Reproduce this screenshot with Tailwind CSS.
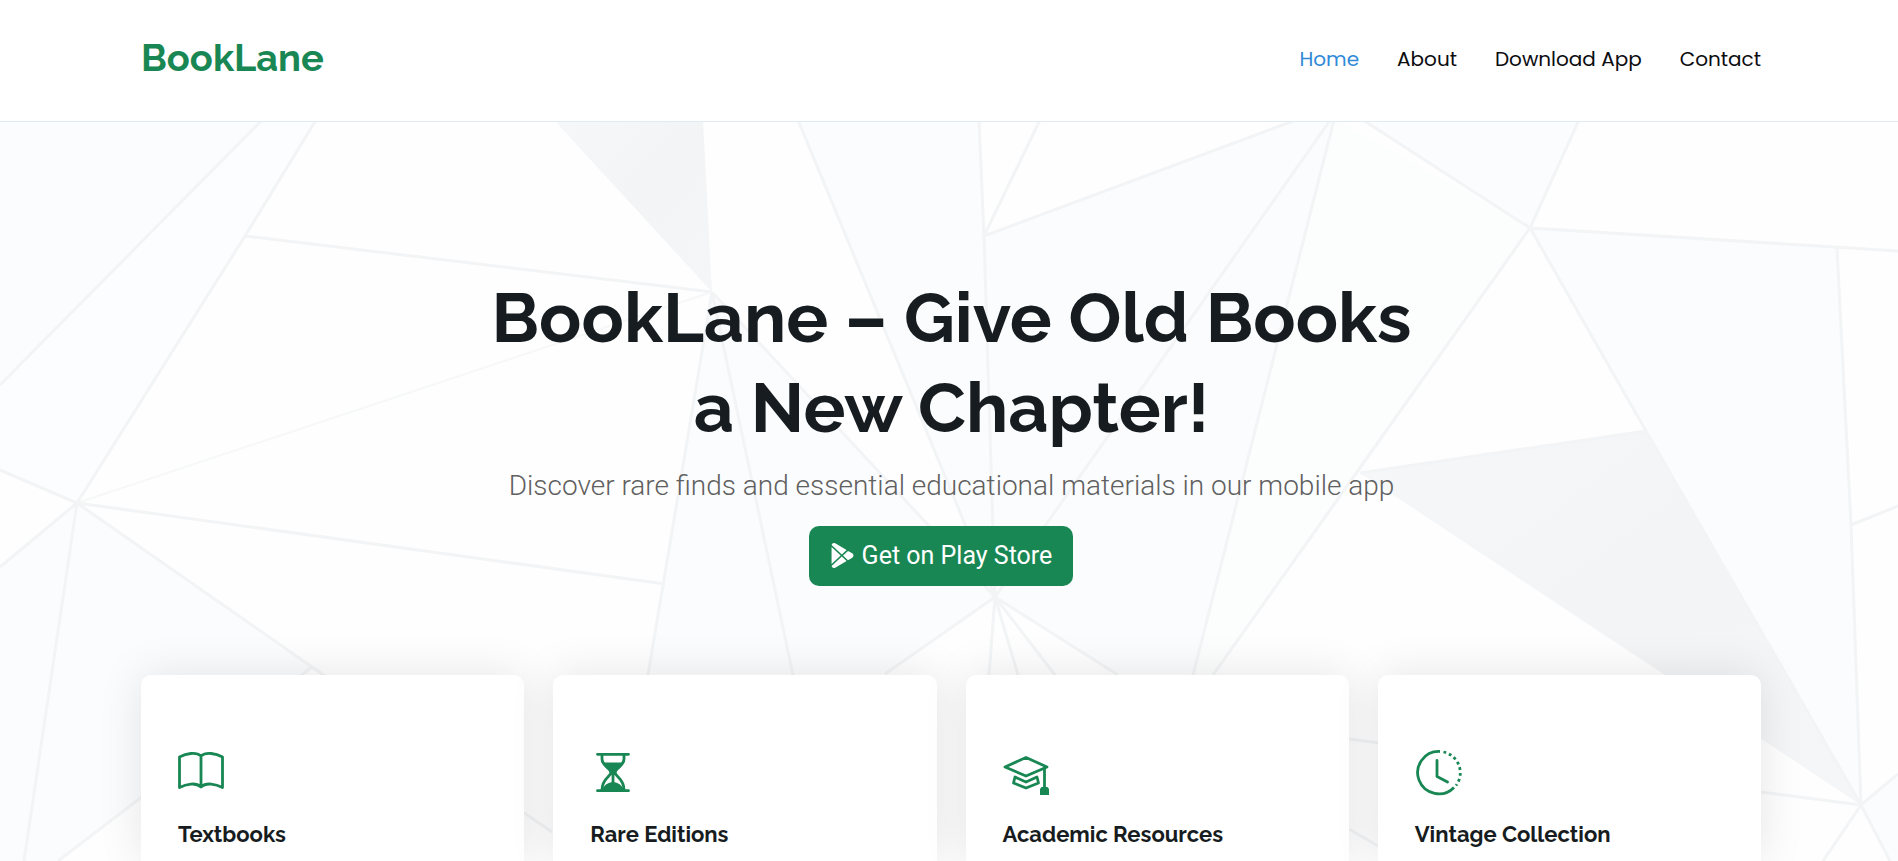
<!DOCTYPE html>
<html lang="en">
<head>
  <meta charset="UTF-8" />
  <meta name="viewport" content="width=device-width, initial-scale=1" />
  <title>BookLane</title>
  <script src="https://cdn.jsdelivr.net/npm/@tailwindcss/browser@4"></script>
</head>
<body class="h-screen flex flex-col overflow-hidden bg-white font-[Roboto,sans-serif] text-[#161c20]">

  <!-- Header -->
  <header class="flex items-center justify-between h-[122px] shrink-0 pl-[141px] pr-[137px] pb-1 border-b border-[#dfebf5] bg-white">
    <a href="#" class="pb-[2px] font-[Raleway,Lato,sans-serif] text-[38px] leading-[48px] font-bold text-[#198754]">BookLane</a>
    <nav class="flex gap-[38px] font-[Poppins,Inter,sans-serif] text-[20px] leading-[30px] text-[#0b0d0f]">
      <a href="#" class="text-[#318ad8]">Home</a>
      <a href="#about">About</a>
      <a href="#download">Download App</a>
      <a href="#contact">Contact</a>
    </nav>
  </header>

  <!-- Hero -->
  <main class="relative flex-1 flex flex-col overflow-hidden bg-[#fefefe]">
    <svg class="absolute inset-0 w-full h-full" viewBox="0 122 1898 739" preserveAspectRatio="xMidYMin slice" aria-hidden="true">
      <defs>
        <linearGradient id="shade" x1="0" y1="0" x2="1" y2="1">
          <stop offset="0" stop-color="#f6f7f8" />
          <stop offset="0.5" stop-color="#f3f4f5" />
          <stop offset="1" stop-color="#f5f6f7" />
        </linearGradient>
      </defs>
      <!-- pale facets -->
      <g fill="#fbfcfd">
        <path d="M0 120H262L0 385Z" />
        <path d="M262 120H316L245 236L77 503L0 470V385Z" fill="#fcfdfe" />
        <path d="M0 567L77 503L312 667L58 861H0Z" />
        <path d="M712 292L995 597L885 674H648Z" />
        <path d="M798 120H979L995 597Z" />
        <path d="M984 236L1296 120H1336L1193 674H1118L995 597Z" />
        <path d="M1336 120L1530 228L1360 473L1213 674H1193Z" fill="#fcfdfd" />
        <path d="M1363 120H1579L1530 228Z" />
        <path d="M1530 228L1837 248L1861 805L1646 431Z" />
        <path d="M1861 805L1898 774V861H1890Z" />
      </g>
      <!-- darker facets -->
      <path d="M554 120H703L712 292Z" fill="url(#shade)" />
      <path d="M1360 473L1646 431L1861 805Z" fill="url(#shade)" />
      <!-- creases -->
      <g fill="none" stroke="#f2f4f5" stroke-width="3">
        <path d="M262 120L0 385M316 120L245 236L77 503M245 236L712 292" />
        <path d="M712 292L77 503" stroke="#f6f7f7" stroke-width="2" />
        <path d="M0 470L77 503L0 567M77 503L24 861M77 503L665 584M77 503L312 667L552 832M312 667L58 861" />
        <path d="M712 292L648 675M712 292L793 675M712 292L995 597M798 120L995 597M885 674L995 597" />
        <path d="M979 120L984 236L995 597M1040 120L984 236L1296 120M1336 112L995 597M1336 112L1193 675" />
        <path d="M995 597L989 675M995 597L1018 675M995 597L1055 675M995 597L1118 675" />
        <path d="M1363 120L1530 228L1579 120M1530 228L1898 251M1530 228L1213 675M1360 473L1646 431M1530 228L1646 431L1861 805" />
        <path d="M1837 248L1851 525L1861 805M1851 525L1898 506M1898 774L1861 805L1890 861M1861 805L1823 861M1861 805L1349 739M1349 829L1378 846" />
      </g>
    </svg>

    <section class="relative flex flex-col items-center pt-[150px] pl-[5px] text-center">
      <h1 class="font-[Raleway,Lato,sans-serif] text-[70px] leading-[90px] font-bold">BookLane – Give Old Books<br />a New Chapter!</h1>
      <p class="mt-[14px] text-[28px] leading-[40px] font-light text-[#606060]">Discover rare finds and essential educational materials in our mobile app</p>
      <a href="#download" class="mt-5 mr-[21px] flex items-center gap-[7px] h-[60px] px-[21px] rounded-[10px] bg-[#198754] text-[25px] leading-[38px] text-white">
        <svg class="w-[25px] h-[25px] mb-[2px]" viewBox="0 0 16 16" fill="currentColor" aria-hidden="true">
          <path d="M14.222 9.374c1.037-.61 1.037-2.137 0-2.748L11.528 5.04 8.32 8l3.207 2.96zm-3.595 2.116L7.583 8.68 1.03 14.73c.201 1.029 1.36 1.61 2.303 1.055zM1 13.396V2.603L6.846 8zM1.03 1.27l6.553 6.05 3.044-2.81L3.333.215C2.39-.341 1.231.24 1.03 1.27" />
        </svg>
        Get on Play Store
      </a>
    </section>

    <!-- Feature cards -->
    <section class="relative flex-1 grid grid-cols-4 gap-[29px] mt-[89px] pl-[141px] pr-[137px] font-[Raleway,Lato,sans-serif] text-[22px] leading-[30px] font-bold">
      <article class="px-[37px] pt-[74px] rounded-t-[10px] bg-white shadow-[0_0_45px_rgba(0,0,0,0.1)]">
        <svg class="w-[46px] h-[46px] text-[#198754]" viewBox="0 0 46 46" fill="none" stroke="currentColor" stroke-width="2.8" stroke-linejoin="round" aria-hidden="true">
          <path d="M1.5 8C8 4.5 18 2.5 23 7C28 2.5 38 4.5 44.5 8V38.5C38 35 28 33 23 38C18 33 8 35 1.5 38.5ZM23 7V38" />
        </svg>
        <h2 class="mt-6">Textbooks</h2>
      </article>
      <article class="px-[37px] pt-[74px] rounded-t-[10px] bg-white shadow-[0_0_45px_rgba(0,0,0,0.1)]">
        <svg class="w-[46px] h-[46px] text-[#198754]" viewBox="0 0 46 46" fill="none" stroke="currentColor" stroke-width="2.8" stroke-linecap="round" aria-hidden="true">
          <path d="M7.5 5.300H38.5M7.5 41.700H38.5" />
          <path d="M12 6V10C12 17 19.5 18.5 21 22V24C19.5 28 12 30 12 41M34 6V10C34 17 26.5 18.5 25 22V24C26.5 28 34 30 34 41M23 22V36" />
          <path d="M12.5 13.5H33.5C32 19 27 20 26 25H20C19 20 14 19 12.5 13.5ZM12 41C14 36 18 33.5 23 33C28 33.5 32 36 34 41Z" fill="currentColor" stroke="none" />
        </svg>
        <h2 class="mt-6">Rare Editions</h2>
      </article>
      <article class="px-[37px] pt-[74px] rounded-t-[10px] bg-white shadow-[0_0_45px_rgba(0,0,0,0.1)]">
        <svg class="w-[46px] h-[46px] text-[#198754]" viewBox="0 0 46 46" fill="none" stroke="currentColor" stroke-width="2.8" stroke-linejoin="round" aria-hidden="true">
          <path d="M2 18L23 8.5L44 18L23 27ZM41.500 19V39" />
          <path d="M12 28L23 33L34 28L35.5 34L23 39L10.5 34Z" />
          <path d="M38.500 38H44.500L46 40V46H37V40Z" fill="currentColor" stroke="none" />
        </svg>
        <h2 class="mt-6">Academic Resources</h2>
      </article>
      <article class="px-[37px] pt-[74px] rounded-t-[10px] bg-white shadow-[0_0_45px_rgba(0,0,0,0.1)]">
        <svg class="w-[46px] h-[46px] text-[#198754] overflow-visible" viewBox="0 0 46 46" fill="none" stroke="currentColor" stroke-width="2.8" aria-hidden="true">
          <path d="M25 2.5A21.2 21.2 0 1 0 39 38.5" />
          <path d="M28.5 3A21.2 21.2 0 0 1 41 36.5" stroke-dasharray="2.8 3" />
          <path d="M22 11.500V27.500L32.500 33" stroke-linecap="round" stroke-linejoin="round" />
        </svg>
        <h2 class="mt-6">Vintage Collection</h2>
      </article>
    </section>
  </main>

</body>
</html>
